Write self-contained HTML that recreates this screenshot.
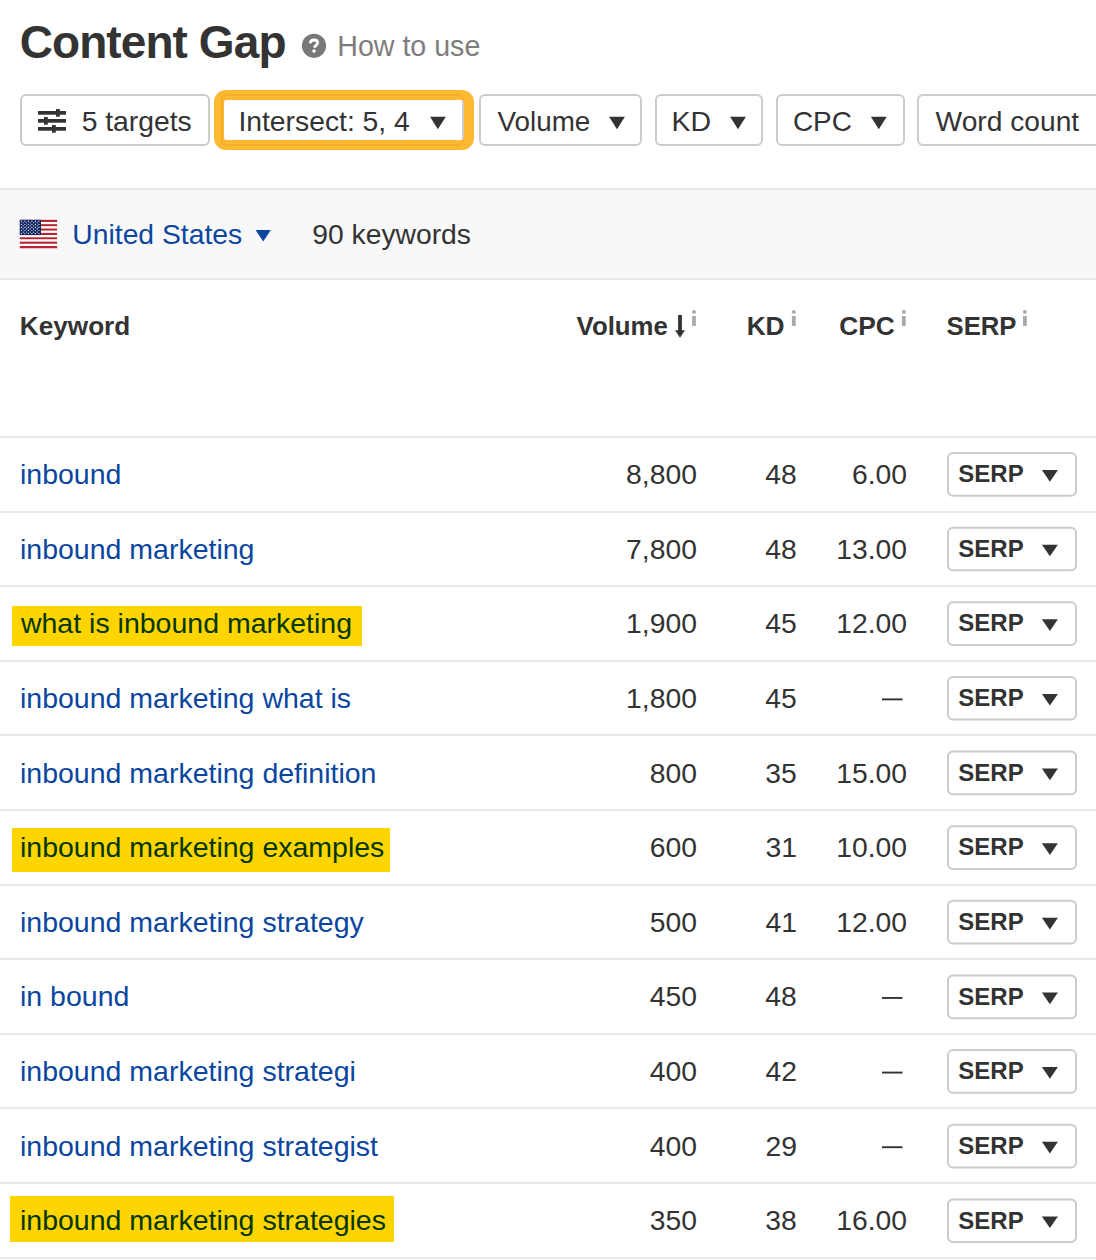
<!DOCTYPE html>
<html><head><meta charset="utf-8"><title>Content Gap</title>
<style>
html,body{margin:0;padding:0;background:#fff;width:1096px;height:1260px;overflow:hidden}
svg{display:block;font-family:"Liberation Sans", sans-serif}
</style></head><body>
<svg width="1096" height="1260" viewBox="0 0 1096 1260">
<text x="19.71" y="58.40" font-size="46" font-weight="bold" fill="#333333" letter-spacing="-0.92">Content Gap</text>
<circle cx="314" cy="45.8" r="12.1" fill="#787878"/>
<path d="M310.3 43.3C310.4 41 312.1 40 314.1 40C316.2 40 317.6 41.1 317.6 42.8C317.6 45 315 45.4 314.4 47.7" fill="none" stroke="#fff" stroke-width="2.8"/>
<circle cx="314" cy="51" r="1.7" fill="#fff"/>
<text x="337.25" y="55.60" font-size="28.6" font-weight="normal" fill="#7d7d7d" >How to use</text>
<rect x="21" y="95" width="188" height="50" rx="5" fill="#fff" stroke="#cccccc" stroke-width="2"/>
<rect x="38" y="111" width="28" height="3.7" fill="#333333"/>
<rect x="56" y="109" width="3.8" height="7.7" fill="#333333"/>
<rect x="38" y="119" width="28" height="3.7" fill="#333333"/>
<rect x="44" y="117" width="3.8" height="7.7" fill="#333333"/>
<rect x="38" y="127" width="28" height="3.7" fill="#333333"/>
<rect x="52" y="125" width="3.8" height="7.7" fill="#333333"/>
<text x="81.67" y="131.00" font-size="28.3" font-weight="normal" fill="#333333" >5 targets</text>
<rect x="222" y="95" width="241" height="50" rx="5" fill="#fff" stroke="#cccccc" stroke-width="2"/>
<path fill-rule="evenodd" fill="#fca800" fill-opacity="0.8" d="M226 90H462A12 12 0 0 1 474 102V138A12 12 0 0 1 462 150H226A12 12 0 0 1 214 138V102A12 12 0 0 1 226 90Z M227 100H461A3 3 0 0 1 464 103V137A3 3 0 0 1 461 140H227A3 3 0 0 1 224 137V103A3 3 0 0 1 227 100Z"/>
<text x="238.39" y="131.00" font-size="28.3" font-weight="normal" fill="#333333" >Intersect: 5, 4</text>
<path d="M430.00 116.70H445.80L437.90 129.20Z" fill="#333333"/>
<rect x="480" y="95" width="161" height="50" rx="5" fill="#fff" stroke="#cccccc" stroke-width="2"/>
<text x="497.58" y="131.00" font-size="27.8" font-weight="normal" fill="#333333" >Volume</text>
<path d="M609.10 116.70H624.90L617.00 129.20Z" fill="#333333"/>
<rect x="656" y="95" width="106" height="50" rx="5" fill="#fff" stroke="#cccccc" stroke-width="2"/>
<text x="671.46" y="131.00" font-size="28.5" font-weight="normal" fill="#333333" >KD</text>
<path d="M730.10 116.70H745.90L738.00 129.20Z" fill="#333333"/>
<rect x="777" y="95" width="127" height="50" rx="5" fill="#fff" stroke="#cccccc" stroke-width="2"/>
<text x="792.98" y="131.00" font-size="27.9" font-weight="normal" fill="#333333" >CPC</text>
<path d="M870.90 116.70H886.70L878.80 129.20Z" fill="#333333"/>
<rect x="918" y="95" width="191" height="50" rx="5" fill="#fff" stroke="#cccccc" stroke-width="2"/>
<text x="935.58" y="131.00" font-size="28.2" font-weight="normal" fill="#333333" >Word count</text>
<rect x="0" y="188" width="1096" height="92" fill="#f8f8f8"/>
<rect x="0" y="188" width="1096" height="2" fill="#e8e8eb"/>
<rect x="0" y="278" width="1096" height="2" fill="#e8e8eb"/>
<rect x="19.8" y="219.80" width="37.3" height="2.23" fill="#b8232f"/>
<rect x="19.8" y="221.98" width="37.3" height="2.23" fill="#ffffff"/>
<rect x="19.8" y="224.17" width="37.3" height="2.23" fill="#b8232f"/>
<rect x="19.8" y="226.35" width="37.3" height="2.23" fill="#ffffff"/>
<rect x="19.8" y="228.54" width="37.3" height="2.23" fill="#b8232f"/>
<rect x="19.8" y="230.72" width="37.3" height="2.23" fill="#ffffff"/>
<rect x="19.8" y="232.91" width="37.3" height="2.23" fill="#b8232f"/>
<rect x="19.8" y="235.09" width="37.3" height="2.23" fill="#ffffff"/>
<rect x="19.8" y="237.28" width="37.3" height="2.23" fill="#b8232f"/>
<rect x="19.8" y="239.46" width="37.3" height="2.23" fill="#ffffff"/>
<rect x="19.8" y="241.65" width="37.3" height="2.23" fill="#b8232f"/>
<rect x="19.8" y="243.83" width="37.3" height="2.23" fill="#ffffff"/>
<rect x="19.8" y="246.02" width="37.3" height="2.23" fill="#b8232f"/>
<rect x="19.8" y="219.8" width="21.2" height="15.29" fill="#0f2462"/>
<circle cx="21.40" cy="221.20" r="0.62" fill="#fff"/>
<circle cx="24.90" cy="221.20" r="0.62" fill="#fff"/>
<circle cx="28.40" cy="221.20" r="0.62" fill="#fff"/>
<circle cx="31.90" cy="221.20" r="0.62" fill="#fff"/>
<circle cx="35.40" cy="221.20" r="0.62" fill="#fff"/>
<circle cx="38.90" cy="221.20" r="0.62" fill="#fff"/>
<circle cx="23.15" cy="222.75" r="0.62" fill="#fff"/>
<circle cx="26.65" cy="222.75" r="0.62" fill="#fff"/>
<circle cx="30.15" cy="222.75" r="0.62" fill="#fff"/>
<circle cx="33.65" cy="222.75" r="0.62" fill="#fff"/>
<circle cx="37.15" cy="222.75" r="0.62" fill="#fff"/>
<circle cx="21.40" cy="224.30" r="0.62" fill="#fff"/>
<circle cx="24.90" cy="224.30" r="0.62" fill="#fff"/>
<circle cx="28.40" cy="224.30" r="0.62" fill="#fff"/>
<circle cx="31.90" cy="224.30" r="0.62" fill="#fff"/>
<circle cx="35.40" cy="224.30" r="0.62" fill="#fff"/>
<circle cx="38.90" cy="224.30" r="0.62" fill="#fff"/>
<circle cx="23.15" cy="225.85" r="0.62" fill="#fff"/>
<circle cx="26.65" cy="225.85" r="0.62" fill="#fff"/>
<circle cx="30.15" cy="225.85" r="0.62" fill="#fff"/>
<circle cx="33.65" cy="225.85" r="0.62" fill="#fff"/>
<circle cx="37.15" cy="225.85" r="0.62" fill="#fff"/>
<circle cx="21.40" cy="227.40" r="0.62" fill="#fff"/>
<circle cx="24.90" cy="227.40" r="0.62" fill="#fff"/>
<circle cx="28.40" cy="227.40" r="0.62" fill="#fff"/>
<circle cx="31.90" cy="227.40" r="0.62" fill="#fff"/>
<circle cx="35.40" cy="227.40" r="0.62" fill="#fff"/>
<circle cx="38.90" cy="227.40" r="0.62" fill="#fff"/>
<circle cx="23.15" cy="228.95" r="0.62" fill="#fff"/>
<circle cx="26.65" cy="228.95" r="0.62" fill="#fff"/>
<circle cx="30.15" cy="228.95" r="0.62" fill="#fff"/>
<circle cx="33.65" cy="228.95" r="0.62" fill="#fff"/>
<circle cx="37.15" cy="228.95" r="0.62" fill="#fff"/>
<circle cx="21.40" cy="230.50" r="0.62" fill="#fff"/>
<circle cx="24.90" cy="230.50" r="0.62" fill="#fff"/>
<circle cx="28.40" cy="230.50" r="0.62" fill="#fff"/>
<circle cx="31.90" cy="230.50" r="0.62" fill="#fff"/>
<circle cx="35.40" cy="230.50" r="0.62" fill="#fff"/>
<circle cx="38.90" cy="230.50" r="0.62" fill="#fff"/>
<circle cx="23.15" cy="232.05" r="0.62" fill="#fff"/>
<circle cx="26.65" cy="232.05" r="0.62" fill="#fff"/>
<circle cx="30.15" cy="232.05" r="0.62" fill="#fff"/>
<circle cx="33.65" cy="232.05" r="0.62" fill="#fff"/>
<circle cx="37.15" cy="232.05" r="0.62" fill="#fff"/>
<circle cx="21.40" cy="233.60" r="0.62" fill="#fff"/>
<circle cx="24.90" cy="233.60" r="0.62" fill="#fff"/>
<circle cx="28.40" cy="233.60" r="0.62" fill="#fff"/>
<circle cx="31.90" cy="233.60" r="0.62" fill="#fff"/>
<circle cx="35.40" cy="233.60" r="0.62" fill="#fff"/>
<circle cx="38.90" cy="233.60" r="0.62" fill="#fff"/>
<text x="72.32" y="244.10" font-size="28.3" font-weight="normal" fill="#0a46a0" >United States</text>
<path d="M255.60 230.00H270.80L263.20 241.50Z" fill="#0a46a0"/>
<text x="312.17" y="244.10" font-size="28.3" font-weight="normal" fill="#333333" >90 keywords</text>
<text x="19.85" y="334.70" font-size="26.15" font-weight="bold" fill="#333333" >Keyword</text>
<text x="576.62" y="334.70" font-size="25.8" font-weight="bold" fill="#333333" >Volume</text>
<rect x="678.1" y="315" width="3.8" height="16" fill="#333333"/>
<path d="M675.1 330.2H684.9L680 337.8Z" fill="#333333"/>
<rect x="692.1" y="316" width="3.8" height="9.9" fill="#aaaaaa"/>
<circle cx="694.00" cy="311.9" r="1.95" fill="#aaaaaa"/>
<rect x="791.9" y="316" width="3.8" height="9.9" fill="#aaaaaa"/>
<circle cx="793.80" cy="311.9" r="1.95" fill="#aaaaaa"/>
<rect x="901.9" y="316" width="3.8" height="9.9" fill="#aaaaaa"/>
<circle cx="903.80" cy="311.9" r="1.95" fill="#aaaaaa"/>
<rect x="1023" y="316" width="3.8" height="9.9" fill="#aaaaaa"/>
<circle cx="1024.90" cy="311.9" r="1.95" fill="#aaaaaa"/>
<text x="746.64" y="334.70" font-size="26.3" font-weight="bold" fill="#333333" >KD</text>
<text x="839.22" y="334.70" font-size="26.3" font-weight="bold" fill="#333333" >CPC</text>
<text x="946.56" y="334.70" font-size="25.7" font-weight="bold" fill="#333333" >SERP</text>
<rect x="0" y="436" width="1096" height="2" fill="#e8e8eb"/>
<rect x="0" y="511" width="1096" height="2" fill="#e8e8eb"/>
<rect x="0" y="585" width="1096" height="2" fill="#e8e8eb"/>
<rect x="0" y="660" width="1096" height="2" fill="#e8e8eb"/>
<rect x="0" y="734" width="1096" height="2" fill="#e8e8eb"/>
<rect x="0" y="809" width="1096" height="2" fill="#e8e8eb"/>
<rect x="0" y="884" width="1096" height="2" fill="#e8e8eb"/>
<rect x="0" y="958" width="1096" height="2" fill="#e8e8eb"/>
<rect x="0" y="1033" width="1096" height="2" fill="#e8e8eb"/>
<rect x="0" y="1107" width="1096" height="2" fill="#e8e8eb"/>
<rect x="0" y="1182" width="1096" height="2" fill="#e8e8eb"/>
<rect x="0" y="1257" width="1096" height="2" fill="#e8e8eb"/>
<text x="19.99" y="484.00" font-size="28.5" font-weight="normal" fill="#0a46a0" >inbound</text>
<text x="626.09" y="484.00" font-size="28.3" font-weight="normal" fill="#333333" >8,800</text>
<text x="765.35" y="484.00" font-size="28.3" font-weight="normal" fill="#333333" >48</text>
<text x="852.03" y="484.00" font-size="28.3" font-weight="normal" fill="#333333" >6.00</text>
<rect x="948" y="453.00" width="128" height="42.7" rx="5" fill="#fff" stroke="#cccccc" stroke-width="2"/>
<text x="958.31" y="482.20" font-size="24.0" font-weight="bold" fill="#333333" >SERP</text>
<path d="M1041.90 470.00H1057.90L1049.90 481.70Z" fill="#333333"/>
<text x="19.99" y="558.64" font-size="28.5" font-weight="normal" fill="#0a46a0" >inbound marketing</text>
<text x="626.09" y="558.64" font-size="28.3" font-weight="normal" fill="#333333" >7,800</text>
<text x="765.35" y="558.64" font-size="28.3" font-weight="normal" fill="#333333" >48</text>
<text x="836.29" y="558.64" font-size="28.3" font-weight="normal" fill="#333333" >13.00</text>
<rect x="948" y="527.64" width="128" height="42.7" rx="5" fill="#fff" stroke="#cccccc" stroke-width="2"/>
<text x="958.31" y="556.84" font-size="24.0" font-weight="bold" fill="#333333" >SERP</text>
<path d="M1041.90 544.64H1057.90L1049.90 556.34Z" fill="#333333"/>
<rect x="12" y="606" width="350" height="40" fill="#fed500"/>
<text x="20.94" y="633.28" font-size="28.5" font-weight="normal" fill="#033600" >what is inbound marketing</text>
<text x="626.09" y="633.28" font-size="28.3" font-weight="normal" fill="#333333" >1,900</text>
<text x="765.31" y="633.28" font-size="28.3" font-weight="normal" fill="#333333" >45</text>
<text x="836.29" y="633.28" font-size="28.3" font-weight="normal" fill="#333333" >12.00</text>
<rect x="948" y="602.28" width="128" height="42.7" rx="5" fill="#fff" stroke="#cccccc" stroke-width="2"/>
<text x="958.31" y="631.48" font-size="24.0" font-weight="bold" fill="#333333" >SERP</text>
<path d="M1041.90 619.28H1057.90L1049.90 630.98Z" fill="#333333"/>
<text x="19.99" y="707.92" font-size="28.5" font-weight="normal" fill="#0a46a0" >inbound marketing what is</text>
<text x="626.09" y="707.92" font-size="28.3" font-weight="normal" fill="#333333" >1,800</text>
<text x="765.31" y="707.92" font-size="28.3" font-weight="normal" fill="#333333" >45</text>
<rect x="882" y="698.42" width="20.5" height="1.9" fill="#333333"/>
<rect x="948" y="676.92" width="128" height="42.7" rx="5" fill="#fff" stroke="#cccccc" stroke-width="2"/>
<text x="958.31" y="706.12" font-size="24.0" font-weight="bold" fill="#333333" >SERP</text>
<path d="M1041.90 693.92H1057.90L1049.90 705.62Z" fill="#333333"/>
<text x="19.99" y="782.56" font-size="28.5" font-weight="normal" fill="#0a46a0" >inbound marketing definition</text>
<text x="649.69" y="782.56" font-size="28.3" font-weight="normal" fill="#333333" >800</text>
<text x="765.31" y="782.56" font-size="28.3" font-weight="normal" fill="#333333" >35</text>
<text x="836.29" y="782.56" font-size="28.3" font-weight="normal" fill="#333333" >15.00</text>
<rect x="948" y="751.56" width="128" height="42.7" rx="5" fill="#fff" stroke="#cccccc" stroke-width="2"/>
<text x="958.31" y="780.76" font-size="24.0" font-weight="bold" fill="#333333" >SERP</text>
<path d="M1041.90 768.56H1057.90L1049.90 780.26Z" fill="#333333"/>
<rect x="12" y="828" width="378" height="44" fill="#fed500"/>
<text x="19.99" y="857.20" font-size="28.5" font-weight="normal" fill="#033600" >inbound marketing examples</text>
<text x="649.69" y="857.20" font-size="28.3" font-weight="normal" fill="#333333" >600</text>
<text x="765.50" y="857.20" font-size="28.3" font-weight="normal" fill="#333333" >31</text>
<text x="836.29" y="857.20" font-size="28.3" font-weight="normal" fill="#333333" >10.00</text>
<rect x="948" y="826.20" width="128" height="42.7" rx="5" fill="#fff" stroke="#cccccc" stroke-width="2"/>
<text x="958.31" y="855.40" font-size="24.0" font-weight="bold" fill="#333333" >SERP</text>
<path d="M1041.90 843.20H1057.90L1049.90 854.90Z" fill="#333333"/>
<text x="19.99" y="931.84" font-size="28.5" font-weight="normal" fill="#0a46a0" >inbound marketing strategy</text>
<text x="649.69" y="931.84" font-size="28.3" font-weight="normal" fill="#333333" >500</text>
<text x="765.50" y="931.84" font-size="28.3" font-weight="normal" fill="#333333" >41</text>
<text x="836.29" y="931.84" font-size="28.3" font-weight="normal" fill="#333333" >12.00</text>
<rect x="948" y="900.84" width="128" height="42.7" rx="5" fill="#fff" stroke="#cccccc" stroke-width="2"/>
<text x="958.31" y="930.04" font-size="24.0" font-weight="bold" fill="#333333" >SERP</text>
<path d="M1041.90 917.84H1057.90L1049.90 929.54Z" fill="#333333"/>
<text x="19.99" y="1006.48" font-size="28.5" font-weight="normal" fill="#0a46a0" >in bound</text>
<text x="649.69" y="1006.48" font-size="28.3" font-weight="normal" fill="#333333" >450</text>
<text x="765.35" y="1006.48" font-size="28.3" font-weight="normal" fill="#333333" >48</text>
<rect x="882" y="996.98" width="20.5" height="1.9" fill="#333333"/>
<rect x="948" y="975.48" width="128" height="42.7" rx="5" fill="#fff" stroke="#cccccc" stroke-width="2"/>
<text x="958.31" y="1004.68" font-size="24.0" font-weight="bold" fill="#333333" >SERP</text>
<path d="M1041.90 992.48H1057.90L1049.90 1004.18Z" fill="#333333"/>
<text x="19.99" y="1081.12" font-size="28.5" font-weight="normal" fill="#0a46a0" >inbound marketing strategi</text>
<text x="649.69" y="1081.12" font-size="28.3" font-weight="normal" fill="#333333" >400</text>
<text x="765.55" y="1081.12" font-size="28.3" font-weight="normal" fill="#333333" >42</text>
<rect x="882" y="1071.62" width="20.5" height="1.9" fill="#333333"/>
<rect x="948" y="1050.12" width="128" height="42.7" rx="5" fill="#fff" stroke="#cccccc" stroke-width="2"/>
<text x="958.31" y="1079.32" font-size="24.0" font-weight="bold" fill="#333333" >SERP</text>
<path d="M1041.90 1067.12H1057.90L1049.90 1078.82Z" fill="#333333"/>
<text x="19.99" y="1155.76" font-size="28.5" font-weight="normal" fill="#0a46a0" >inbound marketing strategist</text>
<text x="649.69" y="1155.76" font-size="28.3" font-weight="normal" fill="#333333" >400</text>
<text x="765.46" y="1155.76" font-size="28.3" font-weight="normal" fill="#333333" >29</text>
<rect x="882" y="1146.26" width="20.5" height="1.9" fill="#333333"/>
<rect x="948" y="1124.76" width="128" height="42.7" rx="5" fill="#fff" stroke="#cccccc" stroke-width="2"/>
<text x="958.31" y="1153.96" font-size="24.0" font-weight="bold" fill="#333333" >SERP</text>
<path d="M1041.90 1141.76H1057.90L1049.90 1153.46Z" fill="#333333"/>
<rect x="10" y="1196" width="384" height="46" fill="#fed500"/>
<text x="19.99" y="1230.40" font-size="28.5" font-weight="normal" fill="#033600" >inbound marketing strategies</text>
<text x="649.69" y="1230.40" font-size="28.3" font-weight="normal" fill="#333333" >350</text>
<text x="765.35" y="1230.40" font-size="28.3" font-weight="normal" fill="#333333" >38</text>
<text x="836.29" y="1230.40" font-size="28.3" font-weight="normal" fill="#333333" >16.00</text>
<rect x="948" y="1199.40" width="128" height="42.7" rx="5" fill="#fff" stroke="#cccccc" stroke-width="2"/>
<text x="958.31" y="1228.60" font-size="24.0" font-weight="bold" fill="#333333" >SERP</text>
<path d="M1041.90 1216.40H1057.90L1049.90 1228.10Z" fill="#333333"/>
</svg>
</body></html>
